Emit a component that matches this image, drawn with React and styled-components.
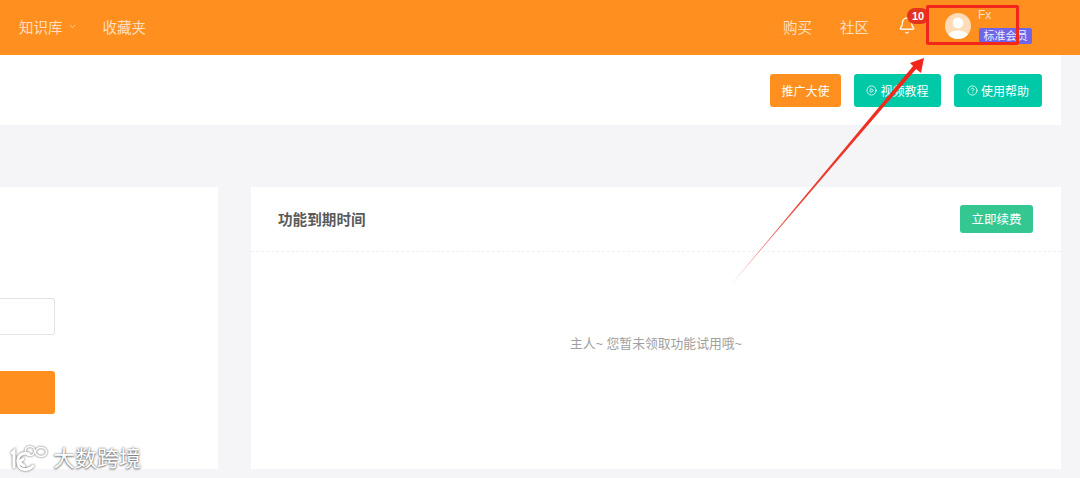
import styled, { createGlobalStyle } from "styled-components";
import { Bell, ChevronDown, CirclePlay, CircleHelp } from "lucide-react";

const GlobalStyle = createGlobalStyle`
  html, body {
    margin: 0;
    padding: 0;
    background-color: #f5f5f8;
    font-family: "Liberation Sans", "Noto Sans CJK SC", sans-serif;
  }
  * {
    box-sizing: border-box;
  }
`

const Page = styled.div`
  position: relative;
  width: 1080px;
  height: 478px;
  overflow: hidden;
  background-color: #f5f5f8;
`

const Header = styled.header`
  display: flex;
  align-items: center;
  height: 55px;
  padding: 0 48px 0 19px;
  background-color: #ff8f1f;
`

const NavItem = styled.span`
  display: flex;
  align-items: center;
  gap: 5px;
  margin-right: ${props => props.$gap || 0}px;
  padding-bottom: 2px;
  color: rgba(255, 255, 255, 0.72);
  font-size: 14.5px;
  white-space: nowrap;
`

const Spacer = styled.div`
  flex: 1;
`

const BellBox = styled.div`
  position: relative;
  display: flex;
  width: 18px;
  height: 20px;
  margin: -3px 29px 0 0;
  color: rgba(255, 255, 255, 0.9);
`

const CountBadge = styled.span`
  position: absolute;
  top: -8px;
  left: 9px;
  width: 22px;
  height: 16px;
  border-radius: 8px;
  background-color: #e2341d;
  color: #fff;
  font-size: 11px;
  font-weight: 700;
  line-height: 16px;
  text-align: center;
`

const User = styled.div`
  display: flex;
  align-items: center;
  gap: 7px;
`

const Avatar = styled.svg`
  display: block;
  width: 26px;
  height: 26px;
  margin-bottom: 4px;
`

const UserInfo = styled.div`
  display: flex;
  flex-direction: column;
  align-items: flex-start;
  width: 54px;
  padding-bottom: 3px;
`

const UserName = styled.span`
  color: rgba(255, 255, 255, 0.72);
  font-size: 12px;
  line-height: 15px;
`

const Level = styled.span`
  width: 53px;
  height: 16px;
  margin: 5px 0 0 1px;
  border-radius: 2px;
  background-color: #6d66e8;
  color: rgba(255, 255, 255, 0.9);
  font-size: 11px;
  line-height: 16px;
  text-align: center;
  white-space: nowrap;
`

const Main = styled.main`
  width: 1061px;
`

const Toolbar = styled.div`
  display: flex;
  align-items: center;
  justify-content: flex-end;
  gap: 13px;
  height: 70px;
  padding-right: 19px;
  background-color: #fff;
`

const ToolButton = styled.button`
  display: flex;
  align-items: center;
  justify-content: center;
  gap: 3px;
  width: ${props => props.$width}px;
  height: 33px;
  padding: 0;
  border: 0;
  border-radius: 3px;
  background-color: ${props => props.$color};
  color: #fff;
  font-family: inherit;
  font-size: 12px;
`

const Columns = styled.div`
  display: grid;
  grid-template-columns: 218px 810px;
  gap: 33px;
  height: 282px;
  margin-top: 62px;
`

const FormCard = styled.section`
  display: flex;
  flex-direction: column;
  align-items: flex-start;
  padding-top: 111px;
  background-color: #fff;
`

const InputStub = styled.div`
  width: 55px;
  height: 37px;
  border: 1px solid #e3e3e6;
  border-left: 0;
  border-radius: 0 3px 3px 0;
  background-color: #fff;
`

const SubmitStub = styled.div`
  width: 55px;
  height: 43px;
  margin-top: 36px;
  border-radius: 0 3px 3px 0;
  background-color: #ff8f1f;
`

const Card = styled.section`
  display: flex;
  flex-direction: column;
  background-color: #fff;
`

const CardHead = styled.div`
  display: flex;
  align-items: center;
  justify-content: space-between;
  height: 65px;
  padding: 0 28px 1px 27px;
  border-bottom: 1px dashed #f0f0f2;
`

const CardTitle = styled.h2`
  margin: 0;
  color: #5a5a5a;
  font-size: 14.6px;
  font-weight: 700;
`

const RenewButton = styled.button`
  width: 73px;
  height: 28px;
  padding: 0;
  border: 0;
  border-radius: 3px;
  background-color: #34c792;
  color: #fff;
  font-family: inherit;
  font-size: 12.5px;
`

const EmptyText = styled.p`
  margin: 0;
  padding-top: 84px;
  color: #a0a0a0;
  font-size: 12.8px;
  line-height: 16px;
  text-align: center;
`

// annotations pasted on top of the screenshot
const Highlight = styled.div`
  position: absolute;
  top: 5px;
  left: 926px;
  width: 93px;
  height: 40px;
  border: 3px solid #f3261c;
  border-radius: 2px;
`

const ArrowLayer = styled.svg`
  position: absolute;
  top: 0;
  left: 0;
  width: 1080px;
  height: 478px;
  pointer-events: none;
`

const Watermark = styled.div`
  position: absolute;
  top: 444px;
  left: 9px;
  display: flex;
  align-items: center;
  gap: 2px;
  color: #fff;
  font-size: 22px;
  line-height: 30px;
  text-shadow: 0 0 2px rgba(70, 70, 70, 0.9), 0 1px 2px rgba(70, 70, 70, 0.6);
`

const WatermarkLogo = styled.svg`
  display: block;
  width: 42px;
  height: 30px;
  filter: drop-shadow(0 0 1px rgba(70, 70, 70, 0.9));
`

export default function App() {
  return (
    <Page>
      <GlobalStyle />
      <Header>
        <NavItem $gap={26}>
          知识库
          <ChevronDown size={9} strokeWidth={2} />
        </NavItem>
        <NavItem>收藏夹</NavItem>
        <Spacer />
        <NavItem $gap={28}>购买</NavItem>
        <NavItem $gap={29}>社区</NavItem>
        <BellBox>
          <Bell size={19} strokeWidth={1.9} />
          <CountBadge>10</CountBadge>
        </BellBox>
        <User>
          <Avatar viewBox="0 0 26 26">
            <defs>
              <clipPath id="avatar-clip">
                <circle cx="13" cy="13" r="13" />
              </clipPath>
            </defs>
            <circle cx="13" cy="13" r="13" fill="#ffdcb8" />
            <g clipPath="url(#avatar-clip)" fill="#fff">
              <circle cx="13" cy="10" r="5.4" />
              <ellipse cx="13" cy="23" rx="10" ry="5.6" />
            </g>
          </Avatar>
          <UserInfo>
            <UserName>Fx</UserName>
            <Level>标准会员</Level>
          </UserInfo>
        </User>
      </Header>
      <Main>
        <Toolbar>
          <ToolButton $width={71} $color="#ff8f1f">推广大使</ToolButton>
          <ToolButton $width={87} $color="#00c9a7">
            <CirclePlay size={11} strokeWidth={1.7} />
            视频教程
          </ToolButton>
          <ToolButton $width={88} $color="#00c9a7">
            <CircleHelp size={11} strokeWidth={1.7} />
            使用帮助
          </ToolButton>
        </Toolbar>
        <Columns>
          <FormCard>
            <InputStub />
            <SubmitStub />
          </FormCard>
          <Card>
            <CardHead>
              <CardTitle>功能到期时间</CardTitle>
              <RenewButton>立即续费</RenewButton>
            </CardHead>
            <EmptyText>主人~ 您暂未领取功能试用哦~</EmptyText>
          </Card>
        </Columns>
      </Main>
      <Highlight />
      <ArrowLayer viewBox="0 0 1080 478">
        <defs>
          <linearGradient id="arrow-fade" gradientUnits="userSpaceOnUse" x1="730" y1="286" x2="900" y2="88">
            <stop offset="0" stopColor="#f02a20" stopOpacity="0.35" />
            <stop offset="0.4" stopColor="#e63a2c" stopOpacity="0.95" />
            <stop offset="1" stopColor="#f3261c" />
          </linearGradient>
        </defs>
        <path d="M729 287 L914 65 L917 68 Z" fill="url(#arrow-fade)" />
        <path d="M924 58 L921 73 L916 69 L910 63 Z" fill="#f3261c" />
      </ArrowLayer>
      <Watermark>
        <WatermarkLogo viewBox="0 0 42 30">
          <g fill="none" stroke="#fff" strokeWidth="3" strokeLinecap="round">
            <path d="M3 9 L5 7 V23" />
            <path d="M20 10 C11 7 8 14 9 19 C10 26 18 28 24 22" />
            <path d="M14 15 L10 18 L15 22" />
          </g>
          <g fill="none" stroke="#fff" strokeWidth="1.5">
            <circle cx="21" cy="7" r="4.6" />
            <ellipse cx="32" cy="8" rx="5.6" ry="4.4" />
          </g>
        </WatermarkLogo>
        大数跨境
      </Watermark>
    </Page>
  );
}
